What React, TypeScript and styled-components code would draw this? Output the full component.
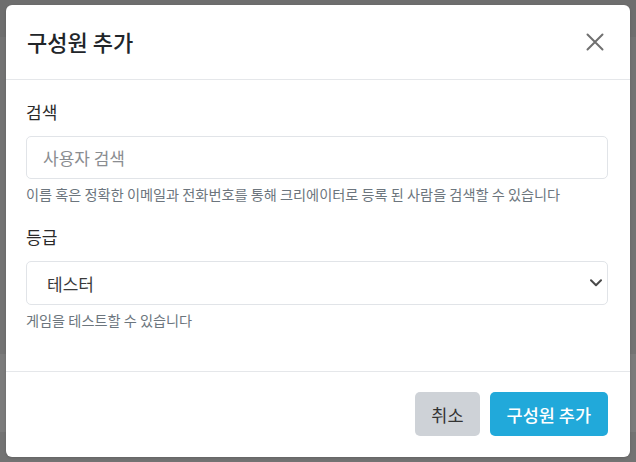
import styled, { createGlobalStyle } from 'styled-components';

const GlobalStyle = createGlobalStyle`
  html, body {
    margin: 0;
    padding: 0;
    width: 636px;
    height: 462px;
    overflow: hidden;
    font-family: "Noto Sans CJK KR", "Noto Sans", sans-serif;
  }
  * { box-sizing: border-box; }
`;

// the page behind the dimmed overlay
const Page = styled.div`
  position: relative;
  width: 636px;
  height: 462px;
  display: flex;
  flex-direction: column;
  background: #767676;
`;

const Band = styled.div<{ $h: number; $c: string }>`
  height: ${(p) => p.$h}px;
  flex-shrink: 0;
  background: ${(p) => p.$c};
`;

const Modal = styled.div`
  position: absolute;
  left: 6px;
  top: 5px;
  width: 624px;
  height: 452px;
  background: #fff;
  border-radius: 6px;
  display: flex;
  flex-direction: column;
  box-shadow: 0 1px 3px rgba(0, 0, 0, 0.15);
`;

const Header = styled.div`
  display: flex;
  align-items: center;
  justify-content: space-between;
  padding: 20px 21px 21px 21px;
  border-bottom: 1px solid #e5e7ea;
`;

const Title = styled.h5`
  margin: 0;
  font-size: 22px;
  line-height: 33px;
  font-weight: 500;
  color: #212529;
`;

const CloseButton = styled.button`
  border: 0;
  background: none;
  padding: 0;
  width: 20px;
  height: 20px;
  display: flex;
  align-items: center;
  justify-content: center;
  cursor: pointer;
  margin-right: 4px;
`;

const Body = styled.div`
  padding: 20px 22px 20px 20px;
  flex: 1;
`;

const Group = styled.div`
  margin-bottom: 20px;
`;

const Label = styled.label`
  display: block;
  font-size: 17px;
  line-height: 24px;
  color: #2a2a2a;
  margin-bottom: 12px;
`;

const TextInput = styled.input`
  display: block;
  width: 100%;
  height: 43px;
  padding: 0 16px;
  font-family: inherit;
  font-size: 17px;
  color: #333;
  border: 1px solid #e1e4e8;
  border-radius: 5px;
  outline: none;
  &::placeholder {
    color: #8a8d91;
  }
`;

const SelectWrap = styled.div`
  position: relative;
`;

const Select = styled.select`
  display: block;
  width: 100%;
  height: 44px;
  padding: 0 20px;
  font-family: inherit;
  font-size: 17px;
  color: #3a3a3a;
  background: #fff;
  border: 1px solid #e1e4e8;
  border-radius: 5px;
  appearance: none;
  outline: none;
`;

const Chevron = styled.svg`
  position: absolute;
  right: 6px;
  top: 18px;
  pointer-events: none;
`;

const Help = styled.div`
  margin-top: 5px;
  font-size: 14.2px;
  line-height: 21px;
  color: #6c757d;
`;

const Footer = styled.div`
  display: flex;
  justify-content: flex-end;
  gap: 10px;
  padding: 20px 22px 21px 20px;
  border-top: 1px solid #e5e7ea;
`;

const Button = styled.button<{ $primary?: boolean }>`
  height: 44px;
  padding: 0 ${(p) => (p.$primary ? 17 : 16)}px;
  border: 0;
  border-radius: 5px;
  font-family: inherit;
  font-size: 17.5px;
  font-weight: ${(p) => (p.$primary ? 500 : 400)};
  color: ${(p) => (p.$primary ? '#fff' : '#333')};
  background: ${(p) => (p.$primary ? '#21a9da' : '#ced2d7')};
  cursor: pointer;
`;

export default function App() {
  return (
    <>
      <GlobalStyle />
      <Page>
        <Band $h={37} $c="#6e6e6e" />
        <Band $h={317} $c="#737373" />
        <Band $h={78} $c="#7b7b7b" />
        <Band $h={30} $c="#737373" />
        <Modal>
          <Header>
            <Title>구성원 추가</Title>
            <CloseButton aria-label="닫기">
              <svg width="18" height="18" viewBox="0 0 18 18">
                <path d="M1.5 1.5 L16.5 16.5 M16.5 1.5 L1.5 16.5" stroke="#707070" strokeWidth="2" strokeLinecap="round" />
              </svg>
            </CloseButton>
          </Header>
          <Body>
            <Group>
              <Label>검색</Label>
              <TextInput placeholder="사용자 검색" />
              <Help>이름 혹은 정확한 이메일과 전화번호를 통해 크리에이터로 등록 된 사람을 검색할 수 있습니다</Help>
            </Group>
            <Group>
              <Label>등급</Label>
              <SelectWrap>
                <Select defaultValue="tester">
                  <option value="tester">테스터</option>
                </Select>
                <Chevron width="12" height="8" viewBox="0 0 12 8">
                  <path d="M1 1.2 L6 6.2 L11 1.2" fill="none" stroke="#4a4a4a" strokeWidth="2" strokeLinecap="round" strokeLinejoin="round" />
                </Chevron>
              </SelectWrap>
              <Help>게임을 테스트할 수 있습니다</Help>
            </Group>
          </Body>
          <Footer>
            <Button>취소</Button>
            <Button $primary>구성원 추가</Button>
          </Footer>
        </Modal>
      </Page>
    </>
  );
}
